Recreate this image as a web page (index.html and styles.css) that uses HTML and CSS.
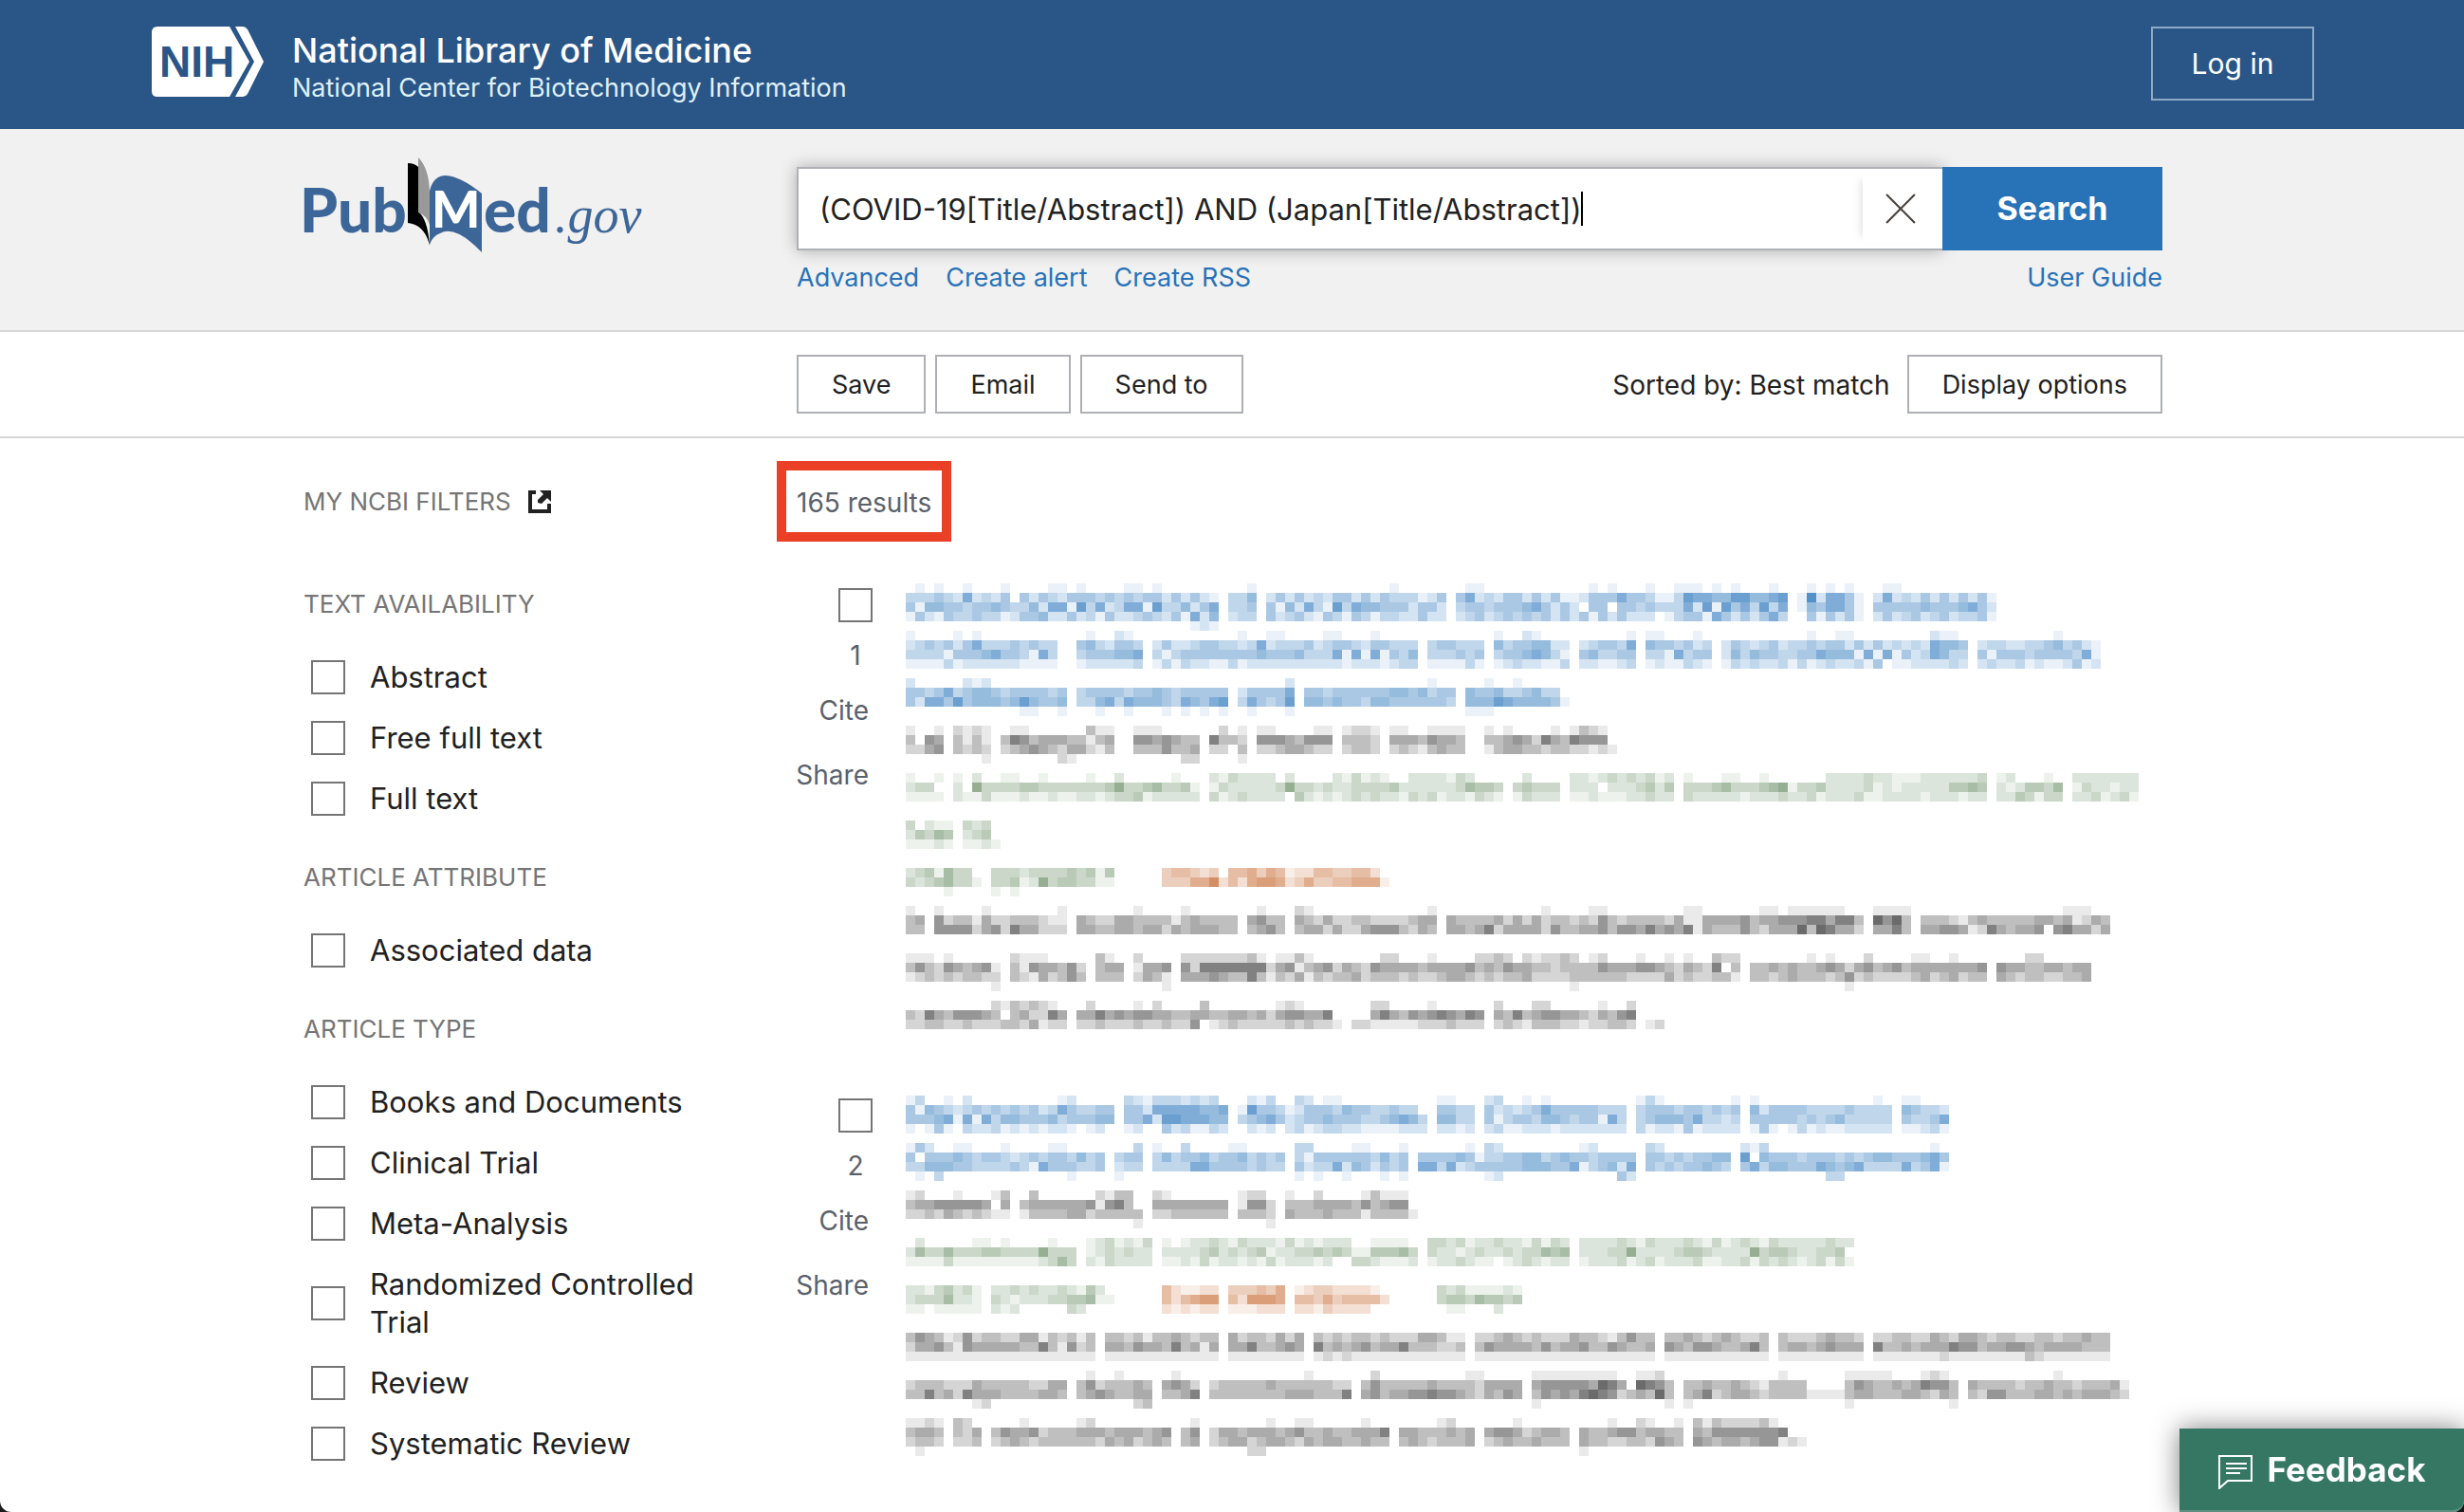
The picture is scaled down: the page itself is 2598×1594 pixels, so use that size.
FILE: index.html
```html
<!DOCTYPE html>
<html lang="en">
<head>
<meta charset="utf-8">
<title>(COVID-19[Title/Abstract]) AND (Japan[Title/Abstract]) - Search Results - PubMed</title>
<link rel="stylesheet" href="styles.css">
</head>
<body>
<header class="ncbi-header">
  <a class="brand" href="#">
    <svg class="nih-logo" viewBox="0 0 118 74" aria-hidden="true">
      <path fill="#fff" d="M6 0H82L103 37L82 74H6Q0 74 0 68V6Q0 0 6 0Z"/>
      <path fill="#fff" d="M88 0H96Q99 0 101 3L118 37L101 71Q99 74 96 74H88L108 37Z"/>
      <text class="nih-text" x="8" y="53">NIH</text>
    </svg>
    <span class="brand-names">
      <span class="brand-name">National Library of Medicine</span>
      <span class="brand-center">National Center for Biotechnology Information</span>
    </span>
  </a>
  <button class="login" type="button">Log in</button>
</header>

<section class="search-header">
  <a class="pubmed" href="#" aria-label="PubMed.gov">
    <svg class="pubmed-logo" viewBox="-6 0 366 110">
      <text class="logo-sans" x="-4" y="84">Pub</text>
      <path fill="#000" d="M110 11Q117 11 121 15V62Q131 70 133 98Q128 76 110 74Z"/>
      <path fill="#999" d="M121 5Q133 17 133 44V76Q130 66 121 63Z"/>
      <path fill="#3d6698" d="M133 40Q137 24 150 24Q166 25 188 43V105Q160 76 144 85Q136 88 133 97Z"/>
      <text class="logo-page" x="135" y="79">M</text>
      <text class="logo-sans" x="190" y="84">ed</text>
      <text class="logo-serif" x="265" y="84">.gov</text>
    </svg>
  </a>
  <form class="search">
    <div class="search-row">
      <div class="search-box">
        <input class="search-input" type="text" aria-label="Search term" value="(COVID-19[Title/Abstract]) AND (Japan[Title/Abstract])">
        <span class="caret"></span>
        <button class="clear" type="button" aria-label="Clear search">
          <svg class="clear-icon" viewBox="0 0 30 30"><path d="M1 1L29 29M29 1L1 29"/></svg>
        </button>
      </div>
      <button class="search-button" type="button">Search</button>
    </div>
    <nav class="search-links">
      <a href="#">Advanced</a>
      <a href="#">Create alert</a>
      <a href="#">Create RSS</a>
      <a class="guide" href="#">User Guide</a>
    </nav>
  </form>
</section>

<section class="toolbar">
  <button class="tool" type="button">Save</button>
  <button class="tool" type="button">Email</button>
  <button class="tool" type="button">Send to</button>
  <span class="sorted">Sorted by: Best match</span>
  <button class="tool" type="button">Display options</button>
</section>

<main class="content">
  <aside class="filters">
    <h2 class="filters-title">MY NCBI FILTERS
      <svg class="external" viewBox="0 0 24 24" aria-hidden="true">
        <path fill="none" stroke="#212121" stroke-width="4" d="M8 2H2V22H22V14"/>
        <path fill="#212121" d="M12 0H24V12L20 8L14 14L10 13V10L16 4Z"/>
      </svg>
    </h2>
    <h3 class="group-title">TEXT AVAILABILITY</h3>
    <ul class="group">
      <li><label><input type="checkbox"><span>Abstract</span></label></li>
      <li><label><input type="checkbox"><span>Free full text</span></label></li>
      <li><label><input type="checkbox"><span>Full text</span></label></li>
    </ul>
    <h3 class="group-title">ARTICLE ATTRIBUTE</h3>
    <ul class="group">
      <li><label><input type="checkbox"><span>Associated data</span></label></li>
    </ul>
    <h3 class="group-title">ARTICLE TYPE</h3>
    <ul class="group">
      <li><label><input type="checkbox"><span>Books and Documents</span></label></li>
      <li><label><input type="checkbox"><span>Clinical Trial</span></label></li>
      <li><label><input type="checkbox"><span>Meta-Analysis</span></label></li>
      <li><label><input type="checkbox"><span>Randomized Controlled Trial</span></label></li>
      <li><label><input type="checkbox"><span>Review</span></label></li>
      <li><label><input type="checkbox"><span>Systematic Review</span></label></li>
    </ul>
  </aside>

  <section class="results">
    <p class="count">165 results</p>
    <article class="result">
      <div class="actions">
        <label class="pick"><input type="checkbox"><span>1</span></label>
        <button type="button">Cite</button>
        <button type="button">Share</button>
      </div>
      <svg class="mosaic" data-item="0" width="1320" height="494" aria-hidden="true"></svg>
    </article>
    <article class="result">
      <div class="actions">
        <label class="pick"><input type="checkbox"><span>2</span></label>
        <button type="button">Cite</button>
        <button type="button">Share</button>
      </div>
      <svg class="mosaic" data-item="1" width="1320" height="394" aria-hidden="true"></svg>
    </article>
  </section>
</main>

<button class="feedback" type="button">
  <svg class="feedback-icon" viewBox="0 0 36 36" aria-hidden="true">
    <path d="M1 1H35V27H10L1 35Z"/><path d="M8 9H30M8 14H30M8 19H23"/>
  </svg>
  Feedback
</button>
<script src="mosaic.js"></script>
</body>
</html>
```
FILE: mosaic.js
```js
// Pixelated result text. Each line is [y, colour, words, row, row, ...].
// "words" lists the column ranges that carry ink. A row holds "column:digits"
// runs, every digit being the strength of one 10px cell; a "3|" prefix gives
// the strength of word cells that have no digit of their own.
const INK = { blue: '32,111,184', grey: '33,33,33', green: '71,115,65', orange: '190,85,20' };
const ITEMS = [
  [
    [2, 'blue', '0-32 34-36 38-56 58-92 94-100 102-114',
      '1:1 3:1 6:1 10:1 15:11 18:1 23:11 26:1 36:11 51:1 59:11 72:1 74:1 78:1 81:111 85:1 87:1 91:1 95:1 97:1 99:1 103:11',
      '3|0:333432623240 12:42432444343 23:4344242421 34:335 38:2424232442424333124 58:462324424241 70:12444644 79:11 81:3766557755666 92:7 94:1826641 102:26232424242 113:41',
      '3|0:415544344543 12:35266173 20:6236617 28:35246 34:334 38:415263173655444 53:2442 58:34434445642 69:4204404434 79:33 81:3627174637 92:6 94:1546641 102:444445444564 114:2',
      '2|0:142143343312 12:4452242314 24:3432416 31:25 34:233 38:423421431431332242 58:23423434 66:3424241424 75:4 79:01 81:344164242463 94:0414241 102:2423423423341',
      '30:121'],
    [52, 'blue', '0-15 18-24 26-53 55-60 62-69 71-76 78-84 86-111 113-125',
      '0:1 5:1 7:1 19:1 22:21 35:1 38:11 44:11 49:1 62:1 65:21 76:1 78:11 83:1 95:1 98:11 108:211 121:1',
      '3|0:2343424633343433 18:453244 26:2422344332362333423 45:4432443332 55:344333 62:53445524 69:2 71:234436 78:5443423 86:24323423343442 100:4242323265544 113:233223345 122:3421',
      '3|0:3333144456443163 18:3444554 24:6 26:31344444444544453 45:616161435362 55:333434 62:34456535 69:1 71:453344 78:3316344 86:25354433446 97:555161 103:6142365 113:41444344443 124:61',
      '2|0:1111312222221111 18:122222 24:3 26:131322113122222 45:2122212311 53:3 55:111131 62:1232211 69:3 71:221123 78:1211321 86:132322313123 99:2314011 107:2223 113:232231211 123:41'],
    [102, 'blue', '0-16 18-33 35-40 42-57 59-69',
      '0:2 6:212 40:2 55:1 61:1 64:1',
      '4|0:44346345543444434 18:34444344543444444 35:244446 42:4434444445545344 59:54453345334532 69:0',
      '4|0:42664745554575445 18:3356365554365467 35:364347 42:5545443554444443 59:55576555544554 69:1',
      '12:11 16:1 20:1 23:1 27:1 29:1 31:1 33:1 36:1 40:1 59:11 61:1'],
    [152, 'grey', '0-3 5-8 10-21 24-30 32-35 37-44 46-49 51-58 61-74',
      '0:1 3:1 5:2121 11:11 19:311 24:111 31:1 33:2 35:1 37:11 43:11 46:1221 51:11 55:1111 61:1 63:1 68:1 70:1321',
      '3|0:3054 5:3131 10:365344433134 24:5545433 32:6332 37:55543555 46:3332 51:44435443 61:334542643654324 72:555 74:0',
      '3|0:2245 5:3232 10:234543244213 24:3335334 32:2203 37:22344322 46:2332 51:23213433 61:134433233221212',
      '8:1 16:21 29:22 35:1 50:1'],
    [202, 'green', '0-3 5-30 32-62 64-68 70-80 82-113 115-121 123-129',
      '0:1 3:1 5:1 7:2 10:11 14:1 19:1 22:2 28:1 32:2132222 40:2 45:213121 53:2222132 65:2 69:1 70:22123232312 82:1 86:11 90:1 97:2222322111222222312 115:12 120:1 123:2222222',
      '3|0:2330 5:206333 11:34433333334 22:6334533342 29:41 32:1322222 40:6332 45:223333422 53:22222354431 64:34333 70:22202223424 82:33345333456 93:1334222231212222 109:24454 115:2124435 123:1322122',
      '2|0:1111 5:2113111211 15:2112212334 25:12222 32:3123222 40:0421212323 50:2213231221 60:321 64:13222 70:1121112232 82:3222221222 92:322312223112 106:212221 115:2243133 123:2231231'],
    [252, 'green', '0-4 6-9',
      '0:30211 6:323',
      '3|0:24354 6:2340',
      '0:11121 6:112 9:1'],
    [302, 'green', '0-7 9-21',
      '3|0:23415330 9:333233334342 20:14',
      '3|0:32345331 9:334126344333 20:11',
      '4:1 9:1 11:1'],
    [302, 'orange', '27-50',
      '3|27:344323 33:0 34:445354 40:12244334422 50:0',
      '3|27:333557 33:2 34:425665 40:23533445554 50:1'],
    [342, 'grey', '0-1 3-16 18-34 36-39 41-55 57-100 102-105 107-126',
      '0:1 3:1 8:1 16:1 24:1 29:1 37:1 41:21 55:1 67:1 72:11 82:11 90:11 93:11 95:1111 102:1111 122:111',
      '3|0:34 3:523314223332114 18:43224433 26:33134333 36:4533 41:432422332222344 57:43333424 65:24233232 73:532333324 82:1144445344555664 98:663 102:7573 107:33321343333344341 124:243',
      '3|0:33 3:555524526442224 18:44334434 26:4243444 36:3453 41:34424224555324 57:44346244 65:44253344 73:535546454614 87:353244473764 99:42 102:4463 107:4455412643445056 123:442432'],
    [392, 'grey', '0-9 11-18 20-22 24-27 29-37 38-87 89-113 115-124',
      '0:111 4:1 11:2111 20:31 24:2 29:222222231 39:1131 50:22 55:1 60:2232 65:212232 72:12 77:1 80:1 82:1 85:322 95:1 97:1 101:2 106:11 110:1 118:22',
      '3|0:353254345 9:1 11:31544352 20:344 24:1445 29:526666666 38:2451345243 48:25444434444534 62:3542 65:43323333 73:5444554324 83:326035 89:3343433454 99:245345 105:3444444 112:45 115:5443344 122:344',
      '3|0:1232323322 11:32142353 20:333 24:2431 29:444543363 38:1324132334 48:233323223443 60:232 65:42222333 73:333222242 83:223312 89:3323433 97:235232222 106:342342 115:4323322334',
      '9:1 27:1 70:1 99:1'],
    [442, 'grey', '0-16 18-45 47-60 62-76 78-79',
      '9:2132321 19:2 24:1 26:2 31:3 39:121 49:22 55:1 62:2 66:22 73:1 76:2',
      '4|0:3264355543034226 18:446454554433443 33:344342455446 45:000046 51:43545654651 61:0 62:43634554 70:43243565 78:00',
      '2|0:2233223222332412 18:2232223223225012 34:322222323 45:102211111222322223 62:232133322 71:12233 78:12']
  ],
  [
    [4, 'blue', '0-21 23-33 35-54 56-59 61-75 77-87 89-103 105-109',
      '0:13 4:1 6:2 16:12 23:32133323 31:23 36:213 41:32 44:11 56:11 61:23 65:1 67:1 77:131 87:1 89:1 102:1 105:11',
      '3|0:4154323434343423643344 22:2 23:4426666655 33:6 35:174431 41:24443544334332 54:0 56:4433 61:423234 67:644444333 77:3444344343 87:4 89:52444433334 105:543323',
      '3|0:4445616163554445344455 23:446277666554 35:34564 40:2 41:344544433456532 56:5533 61:413443554344 73:163 77:34555463 86:2 89:4444434345 105:43346',
      '2|0:1014103223121212210120 23:120 26:0423113 35:02120 41:3123322111122 56:2212 61:23112221 77:3122141 89:1410131211 105:11231'],
    [54, 'blue', '0-20 22-24 26-39 41-52 54-76 78-86 88-109',
      '0:142 5:11 10:1 15:11 24:3 26:1 29:3 34:11 41:33 47:11 52:1 59:1 61:32 71:12 78:32 88:213 108:1',
      '4|0:40444543443234344353 22:344 26:35344534453434 41:3144444435344 54:444454 60:1334455345443444 78:4434344553 88:70544434443434554 106:456',
      '4|0:335554433334316444 18:3342 22:233 26:33336644443433 41:42336254243 54:66362344 62:4445554461345264 78:4343445433 88:463554446545 100:6333363 107:46 109:1',
      '1:1 3:3 17:1 22:1 41:1 43:1 46:1 50:1 52:1 61:12 75:42 97:33'],
    [104, 'grey', '0-10 12-24 26-33 35-38 40-53',
      '0:12 5:1 9:1 10:3 13:3 20:213 23:3 26:21 35:122 40:1 43:2 48:13111',
      '3|0:34455555404 12:3444444515630 26:44444444 35:1552 40:33344443534555 53:0',
      '3|0:22324323211 12:1333344233333 26:22333333 35:3332 40:43334333133333 53:1',
      '11:1 24:1 38:1'],
    [154, 'green', '0-17 19-25 27-53 55-69 71-99',
      '1:2 7:11 10:1 15:1 19:1231213 27:1012232132221 40:3121222 49:1111 55:332312232 64:21313213 71:2222321322232131232132222 96:2322',
      '3|0:25335333443333633 19:1232322 27:2222342 34:3234122334 44:34311 49:44453 55:322123223233545 71:22233622223443222263443 94:2233435 99:0',
      '2|0:1111311111111123 16:53 19:2132222 27:1121312212131 43:1200332 50:111 55:12232110123 66:212211 71:1222312312223112231323 93:2123132 99:1'],
    [204, 'green', '0-7 9-21 56-65',
      '0:22134231 9:223232232142 56:323111 61:1121 65:0',
      '3|0:23335221 9:321222334453 20:11 56:344354434 65:0',
      '0:11011111 9:212 17:32 57:11 62:2'],
    [204, 'orange', '27-32 34-39 41-50',
      '27:421122 34:333435 41:123322221',
      '3|27:424566 34:426665 41:4435344442',
      '27:21 29:2122 34:1112221 41:22132222'],
    [254, 'grey', '0-19 21-32 34-41 43-58 60-78 80-90 92-100 102-126',
      '3|0:3543125233224413231 21:33231334323 34:423324242 43:32323323222443 57:11 60:22343232 68:224332135 80:33432343223 92:3222343323 102:22332243244323322332334',
      '3|0:2445315444443363152 21:4435443634141 34:446334543 43:634345344633322 60:35444435344 71:53354334 80:54355433463 92:3443454443 102:6334344465534455434444',
      '1|2:11 8:11 22:1 30:1 44:21 46:2 61:1 86:1 101:1 109:2 118:32'],
    [294, 'grey', '0-16 18-25 27-30 32-46 48-64 66-80 82-94 95-98 99-110 112-128',
      '19:1 22:1 28:1 42:1 49:2 59:11 66:111111111 77:11 79:2 92:1 99:11111 107:121 121:1',
      '3|0:23332224333332244 18:3523334 25:3 27:4542 32:233333433333322 48:3533333433332 61:4444 66:4555554764 76:0765 82:33433432 90:1 95:0000 99:3543343465533 112:43333233433233343 128:1',
      '3|0:33634264443333443 18:34543344 27:3346 32:333333334443336 48:4534455655432 61:4354 66:3545467652 76:3437 82:3462344323 95:1111 99:3443334432433 112:32553334434344432',
      '7:12 24:23 66:1 80:1 82:1 99:1 110:1'],
    [344, 'grey', '0-3 5-7 9-27 29-30 32-50 52-59 61-69 71-81 83-94',
      '0:1121 5:32 12:1 18:12 30:12 38:1 41:11 48:1 56:12 64:1 74:1 77:21 81:1 83:3132222 90:31',
      '3|0:3443 5:324 9:35445233344434443 25:345 29:35 32:244344434533433444 50:6 52:44333434 61:45542344 71:43345534433 83:4355555556 93:00',
      '3|0:2332 5:223 9:23432333333243423 25:343 29:34 32:23442344324344334 52:34323334 61:23433433 71:43322332543 83:54344345 91:5 92:121',
      '1:1 36:22 70:11']
  ]
];

function inkedColumns(words) {
  const columns = new Set();
  for (const word of words.split(' ')) {
    const [from, to] = word.split('-').map(Number);
    for (let c = from; c <= to; c++) columns.add(c);
  }
  return columns;
}

document.querySelectorAll('.mosaic').forEach(svg => {
  for (const [top, ink, words, ...rows] of ITEMS[svg.dataset.item]) {
    const columns = inkedColumns(words);
    rows.forEach((row, r) => {
      const [base, runs] = row.includes('|') ? row.split('|') : ['0', row];
      const strength = {};
      for (const c of columns) strength[c] = base;
      for (const run of runs.split(' ')) {
        const [start, digits] = run.split(':');
        [...digits].forEach((d, i) => { strength[+start + i] = d; });
      }
      for (const c of columns) {
        if (strength[c] === '0') continue;
        const cell = document.createElementNS('http://www.w3.org/2000/svg', 'rect');
        cell.setAttribute('x', c * 10);
        cell.setAttribute('y', top + r * 10);
        cell.setAttribute('width', 10);
        cell.setAttribute('height', 10);
        cell.setAttribute('fill', `rgba(${INK[ink]},${strength[c] * 0.095})`);
        svg.append(cell);
      }
    });
  }
});
```
FILE: styles.css
```css
* { box-sizing: border-box; }
html { background: #1c1c1c; }
body {
  min-height: 100vh;
  margin: 0;
  background: #fff;
  border-radius: 0 0 12px 12px;
  color: #212121;
  font: 28px/40px Inter, "Liberation Sans", sans-serif;
}
button, input { font: inherit; color: inherit; }
button { cursor: pointer; border-radius: 0; }
a { color: #2872b8; text-decoration: none; }
ul, p, h2, h3 { margin: 0; padding: 0; }
ul { list-style: none; }

.ncbi-header {
  display: flex;
  justify-content: space-between;
  align-items: flex-start;
  height: 136px;
  padding: 28px 158px 0 160px;
  background: #2a5587;
}
.brand { display: flex; gap: 30px; color: #fff; }
.nih-logo { width: 118px; height: 74px; }
.nih-text { font: 700 46px "Liberation Sans", sans-serif; fill: #2a5587; }
.brand-names { display: flex; flex-direction: column; padding-top: 4px; }
.brand-name { font-size: 36px; line-height: 42px; font-weight: 500; }
.brand-center { font-size: 27px; line-height: 38px; color: #dff0f8; }
.login {
  width: 172px;
  height: 78px;
  border: 2px solid #8da9c4;
  background: transparent;
  color: #fff;
  font-size: 30px;
}

.search-header, .toolbar, .content { padding: 0 318px 0 320px; }
.search-header {
  display: grid;
  grid-template-columns: 520px 1fr;
  height: 214px;
  background: #f1f1f1;
  border-bottom: 2px solid #d6d7d9;
}
.pubmed { padding-top: 25px; }
.pubmed-logo { display: block; width: 366px; height: 110px; margin-left: -6px; }
.logo-sans { font: 900 64px Lato, sans-serif; fill: #3d6698; }
.logo-page { font: 900 54px Lato, sans-serif; fill: #fff; }
.logo-serif { font: italic 54px "Liberation Serif", serif; fill: #3d6698; }
.search { padding-top: 40px; }
.search-row { display: flex; height: 88px; }
.search-box {
  position: relative;
  flex: 1;
  display: flex;
  background: #fff;
  border: 2px solid #aeb0b5;
  border-right: 0;
  box-shadow: 0 0 16px rgba(0, 0, 0, .3);
}
.search-input {
  flex: 1;
  min-width: 0;
  padding: 2px 0 0 22px;
  border: 0;
  outline: 0;
  background: transparent;
  font-size: 31px;
}
.caret {
  position: absolute;
  left: 825px;
  top: 24px;
  width: 2px;
  height: 36px;
  background: #000;
}
.clear {
  width: 84px;
  margin: 6px 0;
  padding: 0 4px 0 0;
  border: 0;
  background: #fff;
  box-shadow: -8px 0 8px -6px rgba(0, 0, 0, .12);
}
.clear-icon { display: block; width: 32px; height: 32px; margin: 0 auto; fill: none; stroke: #494440; stroke-width: 2; }
.search-button {
  position: relative;
  width: 232px;
  border: 0;
  background: #2872b8;
  color: #fff;
  font-size: 34px;
  font-weight: 700;
}
.search-links { display: flex; gap: 28px; padding-top: 9px; font-size: 27px; }
.guide { margin-left: auto; }

.toolbar {
  display: flex;
  align-items: center;
  gap: 10px;
  height: 112px;
  padding-left: 840px;
  border-bottom: 2px solid #d6d7d9;
}
.tool {
  height: 62px;
  padding: 2px 35px 0;
  border: 2px solid #aeb0b5;
  background: #fff;
  font-size: 27px;
}
.sorted { margin-left: auto; margin-right: 8px; padding-top: 2px; font-size: 28px; }

.content { display: grid; grid-template-columns: 520px 1fr; }
.filters { padding-top: 51px; }
.filters-title, .group-title {
  color: #757575;
  font-size: 26px;
  line-height: 32px;
  font-weight: 400;
}
.filters-title { display: flex; align-items: center; gap: 18px; margin-bottom: 76px; }
.external { width: 24px; height: 24px; }
.group { display: grid; gap: 24px; width: 440px; padding: 41px 0 47px; font-size: 31px; }
.group label { display: flex; align-items: center; gap: 26px; padding-left: 8px; }
input[type="checkbox"] {
  appearance: none;
  flex: none;
  width: 36px;
  height: 36px;
  margin: 0;
  border: 2px solid #757575;
  background: #fff;
}

.results { padding-top: 24px; color: #5b616b; }
.count {
  width: max-content;
  margin: 0 0 42px -21px;
  padding: 14px 11px 11px;
  border: 10px solid #eb4025;
}
.result { display: flex; gap: 35px; margin-bottom: 44px; }
.actions { display: flex; flex-direction: column; align-items: flex-end; width: 80px; padding-top: 7px; }
.pick { display: flex; flex-direction: column; align-items: center; gap: 15px; margin-bottom: 18px; }
.actions button { margin-bottom: 28px; padding: 0 4px; border: 0; background: none; }
.mosaic { display: block; flex: none; shape-rendering: crispEdges; }

.feedback {
  position: fixed;
  right: 0;
  bottom: 0;
  display: flex;
  align-items: center;
  justify-content: center;
  gap: 16px;
  width: 300px;
  height: 88px;
  padding: 0;
  border: 0;
  border-bottom: 2px solid #5d9080;
  border-bottom-right-radius: 12px;
  background: #367764;
  box-shadow: 0 0 28px rgba(0, 0, 0, .5);
  color: #fff;
  font-size: 35px;
  font-weight: 700;
}
.feedback-icon { width: 36px; height: 36px; margin-top: 6px; fill: none; stroke: #fff; stroke-width: 2; }
```
